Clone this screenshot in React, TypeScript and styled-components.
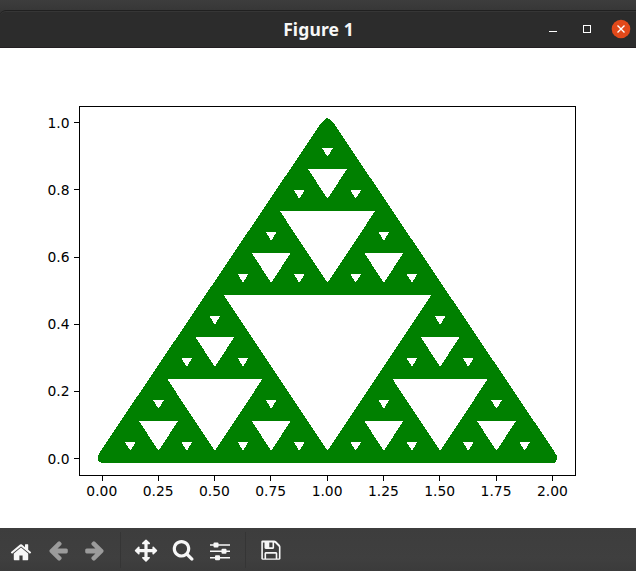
import React from 'react';
import styled, { createGlobalStyle } from 'styled-components';

const GlobalStyle = createGlobalStyle`
  body { margin: 0; background: #3a3a3a; overflow: hidden; }
`;

const Desktop = styled.div`
  width: 636px;
  height: 571px;
  display: flex;
  flex-direction: column;
  padding-top: 10px;
  box-sizing: border-box;
  background: linear-gradient(#3d3d3d, #373737 10px, #2b2b2b 14px);
`;

const TitleBar = styled.header`
  height: 38px;
  flex: none;
  box-sizing: border-box;
  display: grid;
  grid-template-columns: 101px 1fr 100px;
  align-items: center;
  border-top: 1px solid #202020;
  border-bottom: 1px solid #231f22;
  border-top-left-radius: 6px;
  box-shadow: inset 0 1px #363636;
  background: #2c2c2c;
`;

const Title = styled.h1`
  grid-column: 2;
  margin: 0;
  text-align: center;
  font: bold 17.5px/36px 'Noto Sans', sans-serif;
  letter-spacing: 0.12px;
  color: #f7f7f7;
`;

const WindowButtons = styled.div`
  display: flex;
  height: 36px;
`;

const Canvas = styled.main`
  height: 480px;
  flex: none;
  background: #fff;
`;

const Plot = styled.svg`
  display: block;
  text {
    font: 13.89px 'DejaVu Sans', sans-serif;
    fill: #000;
  }
`;

const Toolbar = styled.nav`
  flex: 1;
  display: flex;
  padding-left: 3px;
  background: linear-gradient(#3d3d3d, #3f3f3f 30px, #3b3b3b);
`;

const ToolButton = styled.button<{ $dim?: boolean }>`
  width: 37px;
  height: 43px;
  padding: 0;
  border: 0;
  background: none;
  color: ${(p) => (p.$dim ? '#9b9b9b' : '#f7f7f7')};
  svg { display: block; }
`;

const Separator = styled.span`
  width: 1px;
  margin: 4px 7px 3px 6px;
  background: #353535;
`;

const HOLE_DEPTH = 4;
const LEFT = 101.8;
const BASE = 410.5;
const WIDTH = 450.6;
const HEIGHT = 336;

// Each hole points down and is trimmed by the thickness of the plotted markers.
function holes(x: number, y: number, w: number, h: number, depth: number): string[] {
  if (depth === 0) return [];
  const cx = x + w / 2;
  const mid = cx + 0.4;
  const top = y - h / 2 + 4.5;
  const half = w / 4 - 8.7;
  const hole = `M${mid - half} ${top}H${mid + half}L${mid + 0.3} ${y - 8.1}H${mid - 0.3}Z`;
  return [
    hole,
    ...holes(x, y, w / 2, h / 2, depth - 1),
    ...holes(cx, y, w / 2, h / 2, depth - 1),
    ...holes(x + w / 4, y - h / 2, w / 2, h / 2, depth - 1),
  ];
}

const X_TICKS = ['0.00', '0.25', '0.50', '0.75', '1.00', '1.25', '1.50', '1.75', '2.00'];
const Y_TICKS = ['0.0', '0.2', '0.4', '0.6', '0.8', '1.0'];

function Chart() {
  return (
    <Plot width="636" height="480" viewBox="0 0 636 480">
      <g shapeRendering="crispEdges">
        <path
          fill="#008000"
          d="M98 411V407.5L100.5 403L321.5 74.5L325 71L327.3 70L329.7 71L333.2 74.5L554 403L556.8 408V411L555 414.5H101L98.5 413Z"
        />
        <path fill="#fff" d={holes(LEFT, BASE, WIDTH, HEIGHT, HOLE_DEPTH).join('')} />
        <rect x="79.5" y="58.5" width="496" height="369" fill="none" stroke="#000" />
        {X_TICKS.map((t, i) => (
          <rect key={t} x={Math.round(101.8 + i * 56.32 - 0.3)} y="428" width="1" height="5" />
        ))}
        {Y_TICKS.map((t, i) => (
          <rect key={t} x="74" y={Math.round(410.2 - i * 67.2)} width="5" height="1" />
        ))}
      </g>
      {X_TICKS.map((t, i) => (
        <text key={t} x={101.8 + i * 56.32} y="448" textAnchor="middle">{t}</text>
      ))}
      {Y_TICKS.map((t, i) => (
        <text key={t} x="69.5" y={Math.round(415.6 - i * 67.2)} textAnchor="end">{t}</text>
      ))}
    </Plot>
  );
}

const GLYPHS = {
  home: 'M1472 992v480q0 26-19 45t-45 19h-384v-384h-256v384h-384q-26 0-45-19t-19-45v-480q0-1 .5-3t.5-3l575-474 575 474q1 2 1 6zm223-69l-62 74q-8 9-21 11h-3q-13 0-21-7l-692-577-692 577q-12 8-24 7-13-2-21-11l-62-74q-8-10-7-23.5t11-21.5l719-599q32-26 76-26t76 26l244 204v-195q0-14 9-23t23-9h192q14 0 23 9t9 23v408l219 182q10 8 11 21.5t-7 23.5z',
  arrow: 'M1536 896v128q0 53-32.5 90.5t-84.5 37.5h-704l293 294q38 36 38 90t-38 90l-75 76q-37 37-90 37-52 0-91-37l-651-652q-37-37-37-90 0-52 37-91l651-650q38-38 91-38 52 0 90 38l75 74q38 38 38 91t-38 91l-293 293h704q52 0 84.5 37.5t32.5 90.5z',
  pan: 'M1792 896q0 26-19 45l-256 256q-19 19-45 19t-45-19-19-45v-128h-384v384h128q26 0 45 19t19 45-19 45l-256 256q-19 19-45 19t-45-19l-256-256q-19-19-19-45t19-45 45-19h128v-384h-384v128q0 26-19 45t-45 19-45-19l-256-256q-19-19-19-45t19-45l256-256q19-19 45-19t45 19 19 45v128h384v-384h-128q-26 0-45-19t-19-45 19-45l256-256q19-19 45-19t45 19l256 256q19 19 19 45t-19 45-45 19h-128v384h384v-128q0-26 19-45t45-19 45 19l256 256q19 19 19 45z',
  search: 'M1216 832q0-185-131.5-316.5t-316.5-131.5-316.5 131.5-131.5 316.5 131.5 316.5 316.5 131.5 316.5-131.5 131.5-316.5zm512 832q0 52-38 90t-90 38q-54 0-90-38l-343-342q-179 124-399 124-143 0-273.5-55.5t-225-150-150-225-55.5-273.5 55.5-273.5 150-225 225-150 273.5-55.5 273.5 55.5 225 150 150 225 55.5 273.5q0 220-124 399l343 343q37 37 37 90z',
  save: 'M512 1536h768v-384h-768v384zm896 0h128v-896q0-14-10-38.5t-20-34.5l-281-281q-10-10-34-20t-39-10v416q0 40-28 68t-68 28h-576q-40 0-68-28t-28-68v-416h-128v1280h128v-416q0-40 28-68t68-28h832q40 0 68 28t28 68v416zm-384-928v-320q0-13-9.5-22.5t-22.5-9.5h-192q-13 0-22.5 9.5t-9.5 22.5v320q0 13 9.5 22.5t22.5 9.5h192q13 0 22.5-9.5t9.5-22.5zm640 32v896q0 40-28 68t-68 28h-1344q-40 0-68-28t-28-68v-1344q0-40 28-68t68-28h928q40 0 88 20t76 48l280 280q28 28 48 76t20 88z',
};

type ToolProps = { label: string; glyph: keyof typeof GLYPHS; x: number; y: number; dim?: boolean; flip?: boolean };

function Tool({ label, glyph, x, y, dim, flip }: ToolProps) {
  return (
    <ToolButton aria-label={label} $dim={dim}>
      <svg width="37" height="43" fill="currentColor">
        <path transform={`translate(${x} ${y}) scale(${flip ? -0.0125 : 0.0125} 0.0125)`} d={GLYPHS[glyph]} />
      </svg>
    </ToolButton>
  );
}

export default function App() {
  return (
    <>
      <GlobalStyle />
      <Desktop>
        <TitleBar>
          <Title>Figure 1</Title>
          <WindowButtons>
            <svg width="100" height="36">
              <rect x="13" y="20" width="8" height="1" fill="#fff" />
              <rect x="47.5" y="14.5" width="7" height="7" fill="none" stroke="#fff" />
              <circle cx="85" cy="18" r="9.3" fill="#e2491a" />
              <path d="M81.5 14.5l7 7M88.5 14.5l-7 7" stroke="#fff" strokeWidth="1.4" />
            </svg>
          </WindowButtons>
        </TitleBar>
        <Canvas>
          <Chart />
        </Canvas>
        <Toolbar>
          <Tool label="Home" glyph="home" x={6.8} y={13.1} />
          <Tool label="Back" glyph="arrow" x={8.6} y={11} dim />
          <Tool label="Forward" glyph="arrow" x={27.4} y={11} dim flip />
          <Separator />
          <Tool label="Pan" glyph="pan" x={6.8} y={11.4} />
          <Tool label="Zoom" glyph="search" x={6.9} y={10.4} />
          <ToolButton aria-label="Configure subplots">
            <svg width="37" height="43" fill="currentColor">
              <path d="M8 16.2h20v1.5H8zM8 22.6h20v1.5H8zM8 29h20v1.5H8z" />
              <rect x="11.5" y="14.5" width="5" height="5" rx="1" />
              <rect x="19.5" y="20.8" width="5" height="5" rx="1" />
              <rect x="13" y="27.2" width="5" height="5" rx="1" />
            </svg>
          </ToolButton>
          <Separator />
          <Tool label="Save" glyph="save" x={6.7} y={11.3} />
        </Toolbar>
      </Desktop>
    </>
  );
}
